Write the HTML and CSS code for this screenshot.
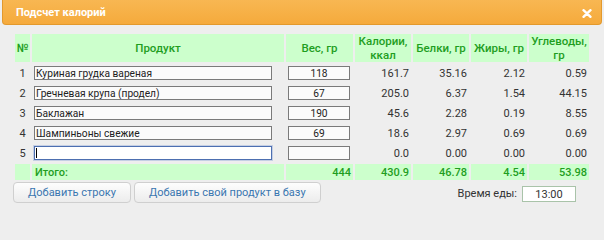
FILE: index.html
```html
<!DOCTYPE html>
<html lang="ru">
<head>
<meta charset="utf-8">
<title>Подсчет калорий</title>
<link rel="stylesheet" href="styles.css">
</head>
<body>
<div class="dialog">
  <div class="titlebar">
    <span class="title">Подсчет калорий</span>
    <span class="close" aria-label="Закрыть">
      <svg width="10" height="9" viewBox="0 0 10 9"><path d="M1.5 1.2 L8.5 7.8 M8.5 1.2 L1.5 7.8" stroke="#fff" stroke-width="2.4" stroke-linecap="round"/></svg>
    </span>
  </div>
  <table class="calc">
    <thead>
      <tr>
        <th class="c-num">№</th>
        <th class="c-prod">Продукт</th>
        <th class="c-w">Вес, гр</th>
        <th class="c-kc">Калории, ккал</th>
        <th class="c-p">Белки, гр</th>
        <th class="c-f">Жиры, гр</th>
        <th class="c-c">Углеводы, гр</th>
      </tr>
    </thead>
    <tbody>
      <tr>
        <td class="n">1</td>
        <td class="prod"><input class="in-prod" value="Куриная грудка вареная"></td>
        <td class="wt"><input class="in-w" value="118"></td>
        <td class="v">161.7</td><td class="v">35.16</td><td class="v">2.12</td><td class="v">0.59</td>
      </tr>
      <tr>
        <td class="n">2</td>
        <td class="prod"><input class="in-prod" value="Гречневая крупа (продел)"></td>
        <td class="wt"><input class="in-w" value="67"></td>
        <td class="v">205.0</td><td class="v">6.37</td><td class="v">1.54</td><td class="v">44.15</td>
      </tr>
      <tr>
        <td class="n">3</td>
        <td class="prod"><input class="in-prod" value="Баклажан"></td>
        <td class="wt"><input class="in-w" value="190"></td>
        <td class="v">45.6</td><td class="v">2.28</td><td class="v">0.19</td><td class="v">8.55</td>
      </tr>
      <tr>
        <td class="n">4</td>
        <td class="prod"><input class="in-prod" value="Шампиньоны свежие"></td>
        <td class="wt"><input class="in-w" value="69"></td>
        <td class="v">18.6</td><td class="v">2.97</td><td class="v">0.69</td><td class="v">0.69</td>
      </tr>
      <tr>
        <td class="n">5</td>
        <td class="prod"><span class="focus-wrap"><input class="in-prod is-focus" value=""><span class="caret"></span></span></td>
        <td class="wt"><input class="in-w" value=""></td>
        <td class="v">0.0</td><td class="v">0.00</td><td class="v">0.00</td><td class="v">0.00</td>
      </tr>
      <tr class="total">
        <td></td>
        <td class="t-label">Итого:</td>
        <td class="v">444</td>
        <td class="v">430.9</td><td class="v">46.78</td><td class="v">4.54</td><td class="v">53.98</td>
      </tr>
    </tbody>
  </table>
  <div class="footer">
    <button class="btn">Добавить строку</button>
    <button class="btn">Добавить свой продукт в базу</button>
    <span class="spacer"></span>
    <label class="time-label">Время еды:</label>
    <input class="in-time" value="13:00">
  </div>
</div>
</body>
</html>
```
FILE: styles.css
```css
html, body {
  margin: 0;
  padding: 0;
  background: #eeeeee;
  font-family: Roboto, "Liberation Sans", sans-serif;
  font-size: 11px;
  color: #333;
}
.dialog {
  width: 604px;
  height: 213px;
}
.titlebar {
  margin: 0 2px;
  height: 25px;
  box-sizing: border-box;
  border: 1px solid #e3992c;
  border-top: none;
  border-radius: 0 0 4px 4px;
  background: linear-gradient(#f8b752, #f5aa3c);
  display: flex;
  align-items: center;
  padding: 0 9px 0 13px;
}
.title {
  color: #fff;
  font-weight: bold;
  font-size: 11px;
  flex: 1;
  padding-top: 1px;
}
.close {
  display: flex;
  margin-top: 2px;
}
.calc {
  border-collapse: separate;
  border-spacing: 2px;
  table-layout: fixed;
  margin: 7px 0 0 13px;
}
.calc th {
  background: #ccffcc;
  color: #1f9e1f;
  font-weight: 500;
  font-size: 11.5px;
  height: 28px;
  line-height: 14px;
  padding: 0;
  box-sizing: border-box;
  text-align: center;
  vertical-align: middle;
}
.c-num { width: 15px; }
.c-prod { width: 252px; }
.c-w { width: 67px; }
.c-kc { width: 56px; }
.c-p { width: 56px; }
.c-f { width: 56px; }
.c-c { width: 60px; }
.calc td {
  height: 18px;
  padding: 0;
  box-sizing: border-box;
  vertical-align: middle;
}
.n {
  text-align: center;
  color: #333;
}
.prod { padding-left: 2px !important; }
.wt { padding-left: 2px !important; }
.v {
  text-align: right;
  padding-right: 2px !important;
}
input {
  font-family: inherit;
  font-size: 10.2px;
  color: #222;
  margin: 0;
  box-sizing: border-box;
  height: 14px;
  border: 1px solid #7a7a7a;
  background: #fbfbfb;
  outline: none;
  display: block;
}
.in-prod {
  width: 238px;
  padding: 0 1px;
}
.in-w {
  width: 62px;
  text-align: center;
  padding: 0;
}
.focus-wrap {
  position: relative;
  display: block;
  width: 238px;
}
.is-focus {
  border-color: #4d6fb0;
  box-shadow: 0 0 0 1px rgba(120, 150, 210, 0.35);
  background: #fff;
}
.caret {
  position: absolute;
  left: 2px;
  top: 2px;
  width: 1px;
  height: 10px;
  background: #000;
}
.total td {
  background: #ccffcc;
  color: #1f9e1f;
  font-weight: 500;
  height: 16px;
}
.t-label {
  padding-left: 3px !important;
}
.footer {
  display: flex;
  align-items: center;
  padding: 0 28px 0 13px;
}
.btn {
  font-family: inherit;
  font-size: 11px;
  color: #3a76b0;
  height: 21px;
  padding: 0 14px;
  margin-right: 3px;
  border: 1px solid #cfcfcf;
  border-radius: 4px;
  background: linear-gradient(#fdfdfd, #ececec);
  cursor: pointer;
}
.spacer { flex: 1; }
.time-label {
  color: #333;
  margin-right: 5px;
  margin-top: 2px;
}
.in-time {
  width: 54px;
  height: 16px;
  font-size: 11px;
  border: 1px solid #a9c3a9;
  background: #fff;
  text-align: center;
  color: #333;
  margin-top: 3px;
}
```
